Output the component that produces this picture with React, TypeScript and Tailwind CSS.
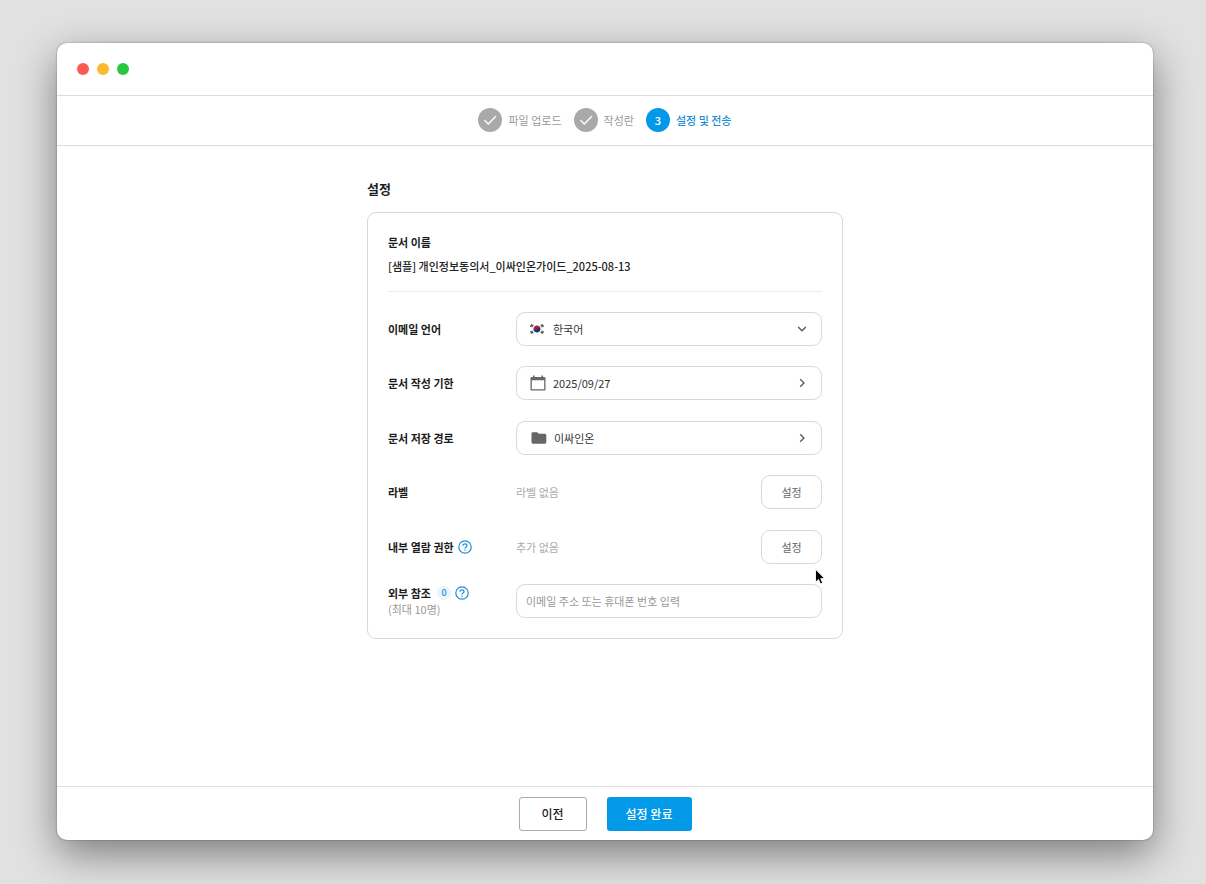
import type { ReactNode } from "react";

const outlineBox = "flex h-[34px] w-full items-center rounded-[9px] border border-[#d9d9d9] bg-white";
const fieldLabel = "block text-[11px] leading-4 font-bold text-[#1c1c1c]";

function DoneMark() {
  return (
    <span className="flex size-6 items-center justify-center rounded-full bg-[#a9a9a9]">
      <svg viewBox="0 0 24 24" className="size-6" fill="none" stroke="#fff" strokeWidth="1.4" aria-hidden="true">
        <path d="M6.4 12.2 10.3 16 17.8 8.2" />
      </svg>
    </span>
  );
}

function Flag() {
  return (
    <svg viewBox="0 0 16 14" className="h-3.5 w-4 shrink-0" aria-hidden="true">
      <g transform="rotate(22 8 7)">
        <path d="M4.6 7a3.4 3.4 0 0 1 6.8 0z" fill="#b8173a" />
        <path d="M4.6 7a3.4 3.4 0 0 0 6.8 0z" fill="#123a7c" />
        <circle cx="6.3" cy="7" r="1.7" fill="#b8173a" />
        <circle cx="9.7" cy="7" r="1.7" fill="#123a7c" />
      </g>
      <g stroke="#444" strokeWidth="1.1">
        <path d="M1.400 4.600 3 2.200M2.600 5.300 4.200 2.900" />
        <path d="M14.600 4.600 13 2.200M13.400 5.300 11.800 2.900" />
        <path d="M1.400 9.400 3 11.800M2.600 8.700 4.200 11.100" />
        <path d="M14.600 9.400 13 11.800M13.400 8.700 11.800 11.100" />
      </g>
    </svg>
  );
}

function CalendarIcon() {
  return (
    <svg viewBox="0 0 16 16" className="size-4 shrink-0" fill="#666" aria-hidden="true">
      <path d="M3 .4h1.5V2h7V.4H13V2h1.1c.8 0 1.4.6 1.4 1.4v10.8c0 .8-.6 1.4-1.4 1.4H1.9c-.8 0-1.4-.6-1.4-1.4V3.4C.5 2.600 1.100 2 1.900 2H3zM1.800 5.200v9.100h12.400V5.200z" />
    </svg>
  );
}

function FolderIcon() {
  return (
    <svg viewBox="0 0 16 12" className="h-3 w-4 shrink-0" fill="#666" aria-hidden="true">
      <path d="M1.900.3h4.300l1.600 1.500h6.100c.8 0 1.400.6 1.400 1.400v7.100c0 .8-.6 1.400-1.400 1.400H1.900c-.8 0-1.400-.6-1.400-1.400V1.700C.5.900 1.100.3 1.900.3z" />
    </svg>
  );
}

function Chevron({ down = false }: { down?: boolean }) {
  return (
    <svg viewBox="0 0 10 10" className="size-2.5 shrink-0" fill="none" stroke="#555" strokeWidth="1.3" aria-hidden="true">
      <path d={down ? "M1.200 3 5 6.800 8.800 3" : "M3.200 1.200 7 5 3.200 8.800"} />
    </svg>
  );
}

function Help({ label }: { label: string }) {
  return (
    <button type="button" aria-label={label} className="shrink-0">
      <svg viewBox="0 0 14 14" className="block size-3.5" fill="none" stroke="#1c8fd6" strokeWidth="1.200" aria-hidden="true">
        <circle cx="7" cy="7" r="6.200" />
        <path d="M5 5.700c0-1.200.9-1.900 2-1.900s2 .7 2 1.800c0 1.400-2 1.500-2 2.900" />
        <path d="M7 9.500v1.200" />
      </svg>
    </button>
  );
}

function Row({ label, children }: { label: ReactNode; children: ReactNode }) {
  return (
    <div className="flex h-[34px] items-center">
      <div className="w-32 shrink-0">{label}</div>
      <div className="flex min-w-0 flex-1 items-center justify-between">{children}</div>
    </div>
  );
}

function SetButton({ id, labelledBy }: { id: string; labelledBy: string }) {
  return (
    <button
      type="button"
      id={id}
      aria-labelledby={`${labelledBy} ${id}`}
      className="h-[34px] w-[61px] rounded-[9px] border border-[#d9d9d9] bg-white text-[11px] leading-4 text-[#666]"
    >
      설정
    </button>
  );
}

export default function App() {
  return (
    <div className="flex min-h-screen flex-col bg-[#e1e1e1] pt-[43px] pr-[53px] pb-11 pl-[57px] font-['Noto_Sans_CJK_KR','Noto_Sans',sans-serif]">
      <div className="flex flex-1 flex-col rounded-[10px] bg-white shadow-[0_0_1px_1px_rgba(0,0,0,0.12),0_14px_40px_rgba(0,0,0,0.45)]">
        <div className="flex h-[53px] items-center gap-2 border-b border-[#dcdcdc] px-5">
          <span className="size-3 rounded-full bg-[#fc5b53]" />
          <span className="size-3 rounded-full bg-[#fdb92f]" />
          <span className="size-3 rounded-full bg-[#29c640]" />
        </div>

        <nav aria-label="진행 단계" className="border-b border-[#dcdcdc] pb-px">
          <ol className="flex h-12 items-center justify-center gap-3 text-[11px] leading-4 text-[#999]">
            <li className="flex items-center gap-1.5">
              <DoneMark />
              파일 업로드
            </li>
            <li className="flex items-center gap-1.5">
              <DoneMark />
              작성란
            </li>
            <li aria-current="step" className="flex items-center gap-1.5 font-medium text-[#1c8fd6]">
              <span className="flex size-6 items-center justify-center rounded-full bg-[#0399e9] text-white">3</span>
              설정 및 전송
            </li>
          </ol>
        </nav>

        <main className="mx-auto w-full max-w-[476px] flex-1 pt-[33px] pb-8">
          <h1 className="text-[13px] leading-5 font-bold text-[#1c1c1c]">설정</h1>
          <form className="mt-[13px] rounded-[9px] border border-[#d9d9d9] p-5">
            <div className="border-b border-[#ececec] pt-px pb-[17px]">
              <h2 className={fieldLabel}>문서 이름</h2>
              <p className="mt-2 text-[11px] leading-4 font-medium text-[#222]">
                [샘플] 개인정보동의서_이싸인온가이드_2025-08-13
              </p>
            </div>

            <div className="mt-5 flex min-h-[306px] flex-col justify-between">
              <Row label={<label htmlFor="lang" className={fieldLabel}>이메일 언어</label>}>
                <div className={`${outlineBox} gap-2 pr-3.5 pl-3`}>
                  <Flag />
                  <select id="lang" className="min-w-0 flex-1 appearance-none bg-transparent text-[11px] leading-4 text-[#333] outline-none">
                    <option>한국어</option>
                  </select>
                  <Chevron down />
                </div>
              </Row>
              <Row label={<span id="due" className={fieldLabel}>문서 작성 기한</span>}>
                <button type="button" id="due-value" aria-labelledby="due due-value" className={`${outlineBox} gap-[7px] pr-3.5 pl-[13px] text-left text-[11px] leading-4 text-[#333]`}>
                  <CalendarIcon />
                  <span className="flex-1">2025/09/27</span>
                  <Chevron />
                </button>
              </Row>
              <Row label={<span id="path" className={fieldLabel}>문서 저장 경로</span>}>
                <button type="button" id="path-value" aria-labelledby="path path-value" className={`${outlineBox} gap-[7px] pr-3.5 pl-3.5 text-left text-[11px] leading-4 text-[#333]`}>
                  <FolderIcon />
                  <span className="flex-1">이싸인온</span>
                  <Chevron />
                </button>
              </Row>
              <Row label={<span id="tag" className={fieldLabel}>라벨</span>}>
                <span className="text-[11px] leading-4 text-[#aaa]">라벨 없음</span>
                <SetButton id="tag-set" labelledBy="tag" />
              </Row>
              <Row
                label={
                  <div className="flex items-center gap-1">
                    <span id="view" className={fieldLabel}>내부 열람 권한</span>
                    <Help label="내부 열람 권한 도움말" />
                  </div>
                }
              >
                <span className="text-[11px] leading-4 text-[#aaa]">추가 없음</span>
                <SetButton id="view-set" labelledBy="view" />
              </Row>
              <Row
                label={
                  <div>
                    <div className="flex h-4 items-center gap-1">
                      <label htmlFor="cc" className={fieldLabel}>외부 참조</label>
                      <span className="ml-0.5 flex size-3.5 items-center justify-center rounded-full bg-[#e9f4fb] text-[9px] leading-3 font-medium text-[#1c8fd6]">0</span>
                      <Help label="외부 참조 도움말" />
                    </div>
                    <p className="text-[11px] leading-4 text-[#999]">(최대 10명)</p>
                  </div>
                }
              >
                <input
                  id="cc"
                  type="text"
                  placeholder="이메일 주소 또는 휴대폰 번호 입력"
                  className={`${outlineBox} px-[9px] text-[11px] leading-4 text-[#333] outline-none placeholder:text-[#999]`}
                />
              </Row>
            </div>
          </form>
        </main>

        <footer className="flex h-[54px] items-center justify-center gap-5 border-t border-[#dfdfdf]">
          <button type="button" className="h-[34px] w-[68px] rounded-[3px] border border-[#aaa] bg-white text-xs leading-4 font-medium text-[#222]">
            이전
          </button>
          <button type="button" className="h-[34px] w-[85px] rounded-[3px] bg-[#0399e9] text-xs leading-4 font-medium text-white">
            설정 완료
          </button>
        </footer>
      </div>

      <svg viewBox="0 0 12 18" className="pointer-events-none absolute top-[568px] left-[814px] h-[18px] w-3" aria-hidden="true">
        <path d="M1.500 1.200v13l3-2.800 2 4.600 2.200-1-2-4.400h4z" fill="#000" stroke="#fff" strokeWidth="0.900" />
      </svg>
    </div>
  );
}
